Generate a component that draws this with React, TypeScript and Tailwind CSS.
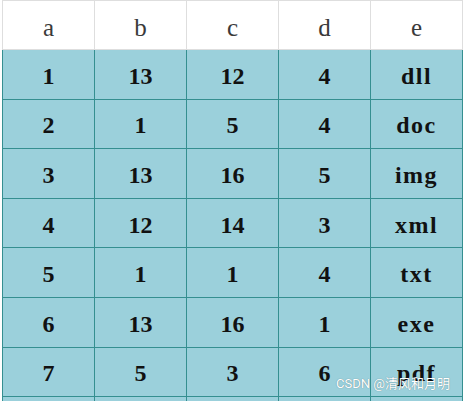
const head = ['a', 'b', 'c', 'd', 'e']

const rows = [
  ['1', '13', '12', '4', 'dll'],
  ['2', '1', '5', '4', 'doc'],
  ['3', '13', '16', '5', 'img'],
  ['4', '12', '14', '3', 'xml'],
  ['5', '1', '1', '4', 'txt'],
  ['6', '13', '16', '1', 'exe'],
  ['7', '5', '3', '6', 'pdf'],
  ['', '', '', '', ''],
]

export default function App() {
  return (
    <div className="relative w-[463px] h-[401px] overflow-hidden bg-white">
      <table
        className="ml-[2px] border-collapse table-fixed w-[460px]"
        style={{ fontFamily: '"Liberation Serif", "Times New Roman", serif' }}
      >
        <thead>
          <tr className="h-[49px]">
            {head.map((h) => (
              <th
                key={h}
                className="w-[92px] p-0 border border-[#dedede] bg-white text-[25px] font-normal text-[#3a3a3a] text-center align-middle pt-[5px]"
              >
                {h}
              </th>
            ))}
          </tr>
        </thead>
        <tbody>
          {rows.map((r, i) => (
            <tr key={i} className="h-[49.6px]">
              {r.map((c, j) => (
                <td
                  key={j}
                  className={`p-0 pt-[3px] border-[1.5px] border-[#358f90] bg-[#9bd0db] text-[24px] font-bold text-[#111] text-center align-middle ${j === 4 ? 'tracking-[1.5px]' : ''}`}
                >
                  {c}
                </td>
              ))}
            </tr>
          ))}
        </tbody>
      </table>
      <div
        className="absolute left-[336px] top-[374px] text-[13px] text-white"
        style={{
          fontFamily: 'Roboto, "Noto Sans CJK SC", sans-serif',
          textShadow: '0 0 1px rgba(0,0,0,0.45)',
        }}
      >
        CSDN @清风和月明
      </div>
    </div>
  )
}
